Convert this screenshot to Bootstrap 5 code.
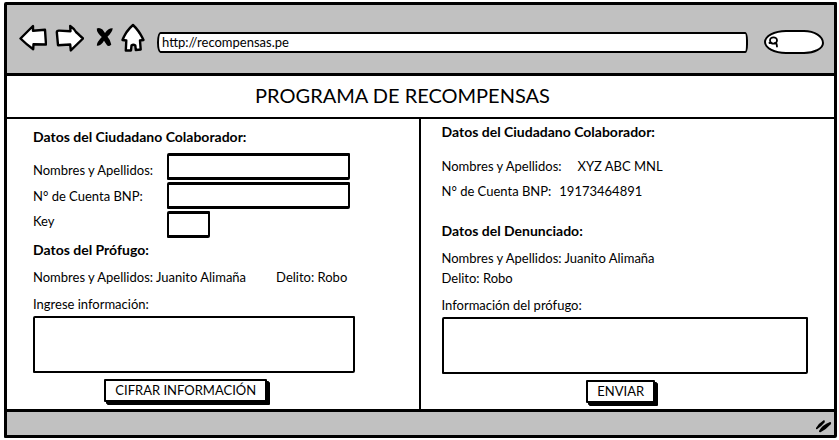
<!DOCTYPE html>
<html lang="es">
<head>
<meta charset="utf-8">
<meta name="viewport" content="width=device-width, initial-scale=1">
<title>Programa de Recompensas</title>
<link href="https://cdn.jsdelivr.net/npm/bootstrap@5.3.0/dist/css/bootstrap.min.css" rel="stylesheet">
<style>
body { font-family: Lato, "Open Sans", sans-serif; font-size: 13px; line-height: 20px; color: #000; background: #fff; padding: 2px 2px 2px 4px; }
.browser { border: 3px solid #000; min-height: calc(100vh - 4px); border-radius: 2px 1px 2px 1px; }
.chrome-bar { background: #c1c1c1; border-bottom: 3px solid #000; padding: 0 10px 0 12px; height: 71px; }
.nav-btn { background: none; border: 0; padding: 0; line-height: 0; }
.nav-btn svg { display: block; }
.nav-icons { gap: 8px; margin-top: -2px; }
.sketch-input { border: 2px solid #000; border-radius: 2px 1px 2px 1px; background: #fff; color: #000; font-size: 13px; line-height: 18px; padding: 0 4px; width: 100%; min-width: 0; }
.address { height: 21px; border-radius: 4px 3px 3px 4px / 12px 10px 10px 12px; margin: 6px 16px 0 12px; padding: 0 3px; }
.search-pill { border: 2px solid #000; border-radius: 22px 20px 20px 22px / 12px 13px 11px 12px; background: #fff; width: 60px; height: 24px; margin-top: 6px; padding-left: 2px; }
.search-pill input { border: 0; background: none; outline: 0; width: 36px; padding: 0; font-size: 12px; line-height: 16px; }
.page-title { font-size: 20px; line-height: 24px; font-weight: 400; padding: 7px 36px 10px 0; border-bottom: 2px solid #000; }
h2 { font-size: 14px; line-height: 20px; font-weight: 700; margin: 0; }
.left-pane { border-right: 2px solid #000; padding: 8px 64px 3px 26px; }
.right-pane { padding: 3px 26px 3px 21px; }
.fields { display: grid; grid-template-columns: 134px 1fr; gap: 2px 0; margin: 6px 5px 2px 0; }
.fields .sketch-input { height: 27px; border-width: 3px 2px; }
.fields .key-input { width: 43px; }
.note { height: 57px; display: block; resize: none; margin: 2px 0 6px; }
.gap-s { margin-top: 5px; }
.gap-m { margin-top: 7px; }
.gap-l { margin-top: 14px; }
.gap-xl { margin-top: 20px; }
.spaced { margin-left: 30px; }
.btn-sketch { border: 2px solid #000; border-radius: 1px; background: #fff; color: #000; font-size: 13px; line-height: 19px; padding: 0 9px; box-shadow: 2px 2px 0 #000, 3px 3px 0 #000; }
.btn-sketch:hover { background: #eee; border-color: #000; }
.status-bar { background: #c1c1c1; border-top: 3px solid #000; height: 26px; padding: 4px 2px 0; }
</style>
<script src="https://cdn.jsdelivr.net/npm/bootstrap@5.3.0/dist/js/bootstrap.bundle.min.js"></script>
</head>
<body>
<div class="browser d-flex flex-column">
  <header class="chrome-bar d-flex align-items-center">
    <div class="nav-icons d-flex align-items-center flex-shrink-0">
      <button class="nav-btn" type="button" aria-label="Atrás"><svg width="28" height="28" viewBox="0 0 28 28" fill="#fff" stroke="#000" stroke-width="2.4" stroke-linejoin="round"><path d="M1.5 14.5 L14 2 V6.8 L26 5.8 L27 20.5 L14.5 20.2 L14.2 25.2 Q7 20 1.5 14.5Z"/></svg></button>
      <button class="nav-btn" type="button" aria-label="Adelante"><svg width="29" height="28" viewBox="0 0 29 28" fill="#fff" stroke="#000" stroke-width="2.4" stroke-linejoin="round"><path d="M1.8 8 Q2 6.5 4 6.6 L15.5 7.2 L15.2 2 Q19 4.5 21 8 L28 14.5 L15.8 26.4 L15.2 20.5 L3 21.2Z"/></svg></button>
      <button class="nav-btn ms-1" type="button" aria-label="Detener"><svg width="17" height="28" viewBox="0 0 17 28" fill="#000"><path d="M.8 4.5 Q3.5 3 6.5 5.5 L9 9 Q12 4 16.7 4.3 Q16.5 8 11.5 12.8 Q14.5 16 15.3 20.5 Q12.5 23.5 10.5 20.5 L8 16.8 Q5 22 .9 21.8 Q.4 18.5 5.8 12.9 Q.5 8.5 .8 4.5Z"/></svg></button>
      <button class="nav-btn" type="button" aria-label="Inicio"><svg width="24" height="30" viewBox="0 0 24 30" fill="#fff" stroke="#000" stroke-width="2.4" stroke-linejoin="round"><path d="M12 2 Q18 7.5 22.5 17 L19 17.5 L19.7 26.5 L14.8 27 L14.3 22.5 Q12.3 21 10.5 22.5 L10 27.5 L4.8 27.5 L5.3 17.5 L1.5 17 Q5 8 12 2Z"/></svg></button>
    </div>
    <input class="sketch-input address flex-grow-1" type="text" aria-label="Dirección" value="http://recompensas.pe">
    <div class="search-pill d-flex align-items-center flex-shrink-0">
      <svg width="11" height="12" viewBox="0 0 11 12" fill="none" stroke="#000" stroke-width="1.8" stroke-linecap="round"><ellipse cx="5.5" cy="4.5" rx="3.5" ry="3.2"/><path d="M1.4 7 L3 6.8 M7 7 L8.6 8 L9 10.5"/></svg>
      <input type="search" aria-label="Buscar">
    </div>
  </header>
  <h1 class="page-title text-center m-0">PROGRAMA DE RECOMPENSAS</h1>
  <main class="row g-0 flex-grow-1">
    <section class="col-6 left-pane">
      <h2>Datos del Ciudadano Colaborador:</h2>
      <div class="fields">
        <label class="align-self-end" for="nombres">Nombres y Apellidos:</label>
        <input class="sketch-input" type="text" id="nombres">
        <label class="align-self-center" for="cuenta">N° de Cuenta BNP:</label>
        <input class="sketch-input" type="text" id="cuenta">
        <label class="align-self-start" for="clave">Key</label>
        <input class="sketch-input key-input" type="text" id="clave">
      </div>
      <h2>Datos del Prófugo:</h2>
      <p class="gap-m mb-0 text-nowrap">Nombres y Apellidos: Juanito Alimaña<span class="spaced">Delito: Robo</span></p>
      <label class="gap-m d-block" for="informacion">Ingrese información:</label>
      <textarea class="sketch-input note" id="informacion"></textarea>
      <div class="text-center pe-3"><button class="btn btn-sketch" type="button">CIFRAR INFORMACIÓN</button></div>
    </section>
    <section class="col-6 right-pane">
      <h2>Datos del Ciudadano Colaborador:</h2>
      <p class="gap-l mb-0">Nombres y Apellidos:<span class="ms-3">XYZ ABC MNL</span></p>
      <p class="gap-s mb-0">N° de Cuenta BNP:<span class="ms-2">19173464891</span></p>
      <h2 class="gap-xl">Datos del Denunciado:</h2>
      <p class="gap-m mb-0">Nombres y Apellidos: Juanito Alimaña<br>Delito: Robo</p>
      <label class="gap-m d-block" for="profugo">Información del prófugo:</label>
      <textarea class="sketch-input note" id="profugo"></textarea>
      <div class="text-center pe-2"><button class="btn btn-sketch" type="button">ENVIAR</button></div>
    </section>
  </main>
  <footer class="status-bar d-flex justify-content-end align-items-center">
    <svg width="17" height="14" viewBox="0 0 17 14" fill="#000" aria-hidden="true"><path d="M1 9 Q4 4 9 1 Q10.5 1.500 9.5 3.5 Q6 8 2 10.3 Q.6 10.5 1 9Z"/><path d="M4 12 Q7 6 15 3 Q17 3.5 15.5 5.5 Q11 10.5 5.5 13.3 Q3.8 13.5 4 12Z"/></svg>
  </footer>
</div>
</body>
</html>
